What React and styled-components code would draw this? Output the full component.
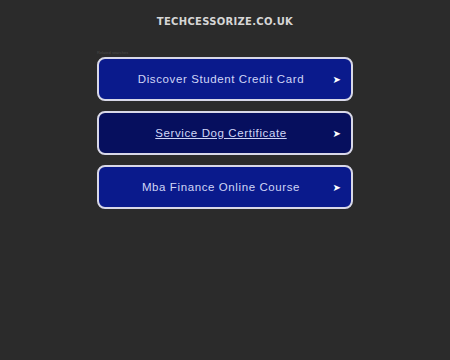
import React from "react";
import styled, { createGlobalStyle } from "styled-components";

const GlobalStyle = createGlobalStyle`
  html, body {
    margin: 0;
    padding: 0;
    background: #2b2b2b;
  }
  body {
    font-family: "DejaVu Sans", "Liberation Sans", sans-serif;
  }
`;

const Page = styled.div`
  width: 450px;
  height: 360px;
  background: #2b2b2b;
  display: flex;
  flex-direction: column;
  align-items: center;
`;

const Title = styled.h1`
  margin: 15px 0 0 0;
  font-family: "DejaVu Sans", sans-serif;
  font-size: 10px;
  line-height: 13px;
  font-weight: bold;
  letter-spacing: 0.3px;
  color: #d6d6d6;
`;

const Links = styled.div`
  width: 256px;
  margin-top: 22px;
  display: flex;
  flex-direction: column;
  gap: 10px;
`;

const Label = styled.div`
  font-family: "Liberation Sans", sans-serif;
  font-size: 4px;
  line-height: 5px;
  color: #4a4a4a;
  margin-bottom: -8px;
`;

const LinkBox = styled.a`
  box-sizing: border-box;
  height: 44px;
  border: 2px solid #d8d8e8;
  border-radius: 8px;
  background: ${(p) => (p.$dark ? "#060f5e" : "#0a1a8c")};
  display: flex;
  align-items: center;
  padding: 0 10px 0 16px;
  text-decoration: none;
  cursor: pointer;
`;

const LinkText = styled.span`
  flex: 1;
  text-align: center;
  font-family: "Liberation Sans", "Open Sans", sans-serif;
  font-size: 11.5px;
  letter-spacing: 0.6px;
  color: #d0d6f6;
  text-decoration: ${(p) => (p.$underline ? "underline" : "none")};
`;

const Arrow = styled.span`
  font-family: "DejaVu Sans", sans-serif;
  font-size: 10px;
  color: #ffffff;
  width: 14px;
  text-align: right;
`;

const items = [
  { text: "Discover Student Credit Card" },
  { text: "Service Dog Certificate", dark: true },
  { text: "Mba Finance Online Course" },
];

export default function App() {
  return (
    <Page>
      <GlobalStyle />
      <Title>TECHCESSORIZE.CO.UK</Title>
      <Links>
        <Label>Related searches</Label>
        {items.map((item) => (
          <LinkBox key={item.text} $dark={item.dark}>
            <LinkText $underline={item.dark}>{item.text}</LinkText>
            <Arrow>➤</Arrow>
          </LinkBox>
        ))}
      </Links>
    </Page>
  );
}
